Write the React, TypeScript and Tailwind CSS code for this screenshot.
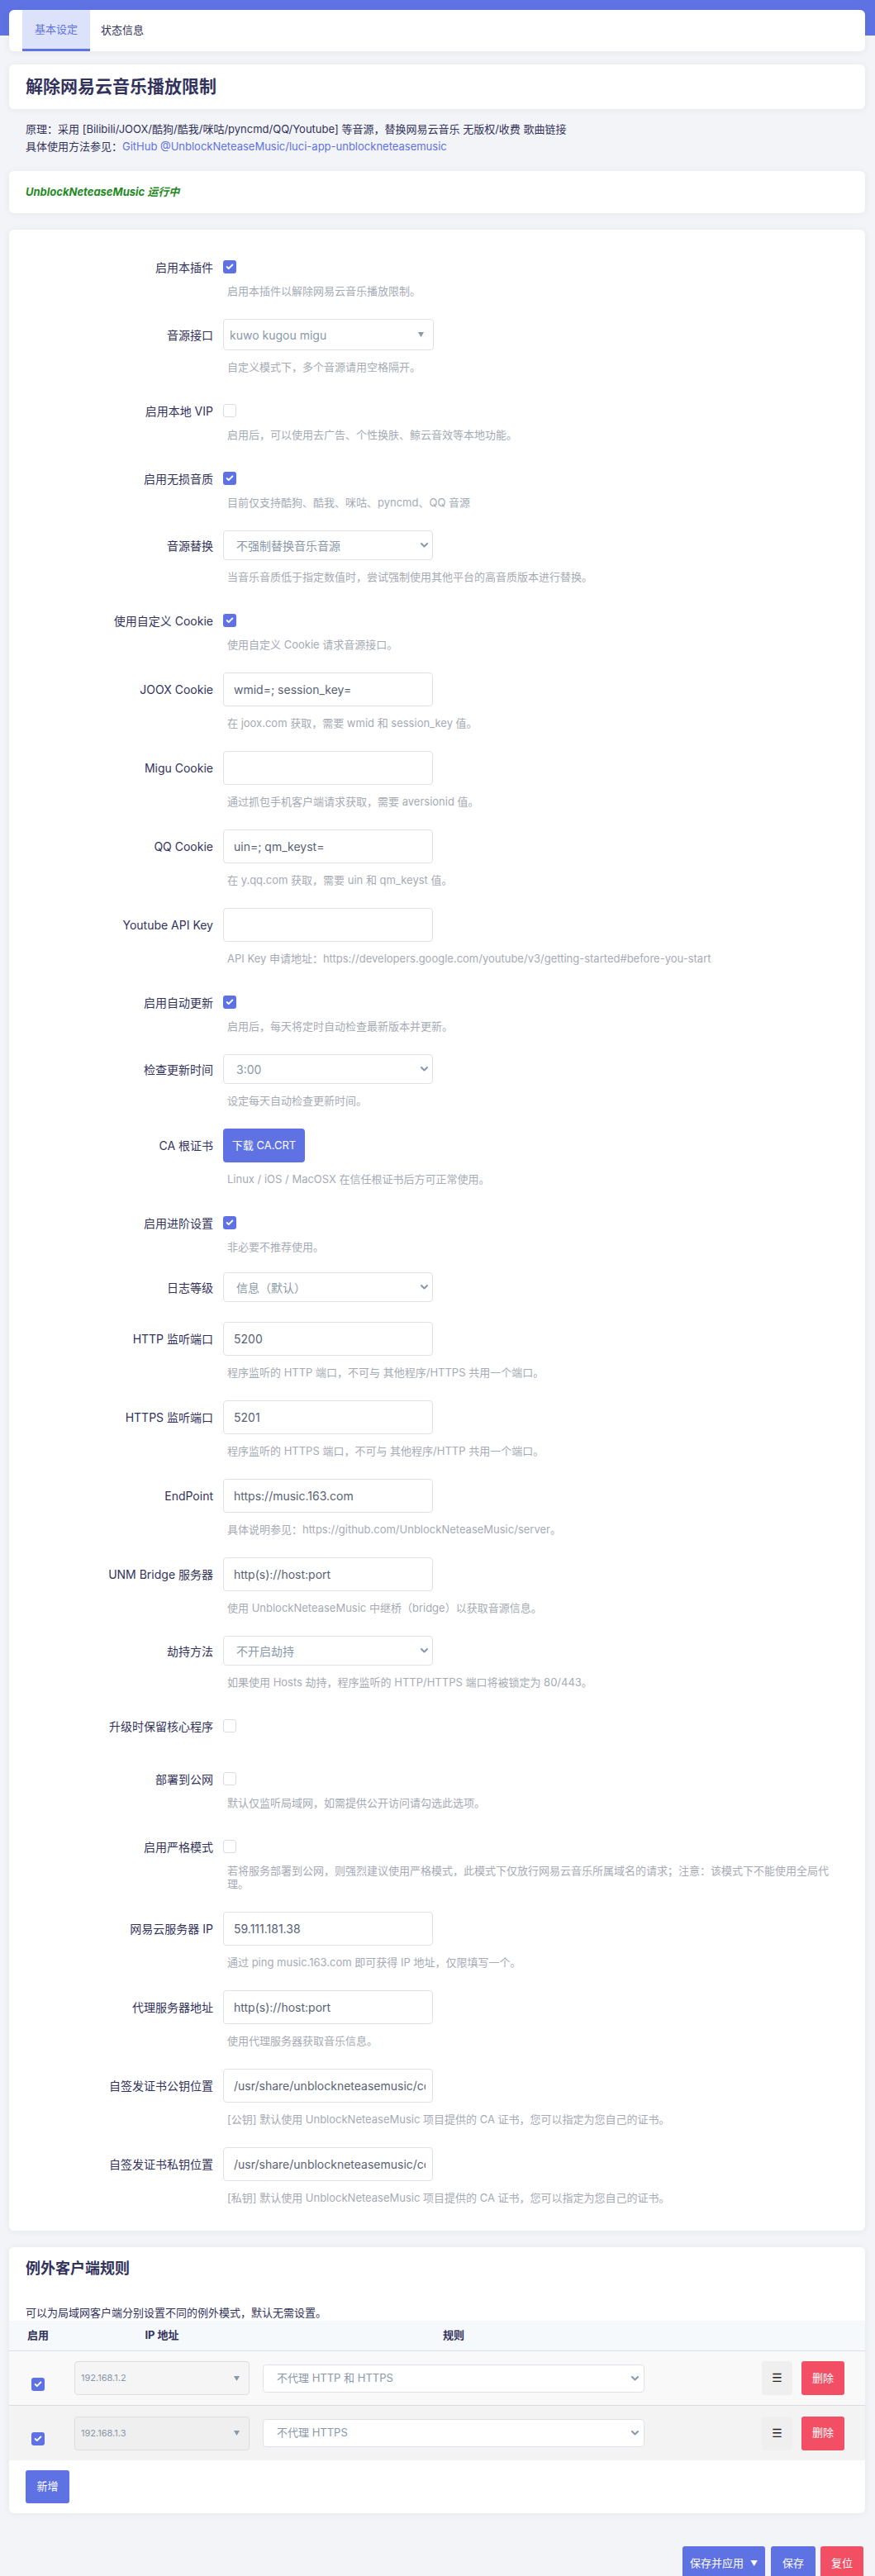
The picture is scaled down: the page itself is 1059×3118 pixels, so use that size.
import React from 'react';
import { Check } from 'lucide-react';

type Kind = 'check' | 'dropdown' | 'select' | 'input' | 'button';

interface Field {
  label: string;
  kind: Kind;
  value?: string;
  checked?: boolean;
  desc?: string;
  extra?: string;
}

const fields: Field[] = [
  { label: '启用本插件', kind: 'check', checked: true, desc: '启用本插件以解除网易云音乐播放限制。' },
  { label: '音源接口', kind: 'dropdown', value: 'kuwo kugou migu', desc: '自定义模式下，多个音源请用空格隔开。' },
  { label: '启用本地 VIP', kind: 'check', checked: false, desc: '启用后，可以使用去广告、个性换肤、鲸云音效等本地功能。' },
  { label: '启用无损音质', kind: 'check', checked: true, desc: '目前仅支持酷狗、酷我、咪咕、pyncmd、QQ 音源' },
  { label: '音源替换', kind: 'select', value: '不强制替换音乐音源', desc: '当音乐音质低于指定数值时，尝试强制使用其他平台的高音质版本进行替换。' },
  { label: '使用自定义 Cookie', kind: 'check', checked: true, desc: '使用自定义 Cookie 请求音源接口。' },
  { label: 'JOOX Cookie', kind: 'input', value: 'wmid=; session_key=', desc: '在 joox.com 获取，需要 wmid 和 session_key 值。' },
  { label: 'Migu Cookie', kind: 'input', value: '', desc: '通过抓包手机客户端请求获取，需要 aversionid 值。' },
  { label: 'QQ Cookie', kind: 'input', value: 'uin=; qm_keyst=', desc: '在 y.qq.com 获取，需要 uin 和 qm_keyst 值。' },
  { label: 'Youtube API Key', kind: 'input', value: '', desc: 'API Key 申请地址：https://developers.google.com/youtube/v3/getting-started#before-you-start' },
  { label: '启用自动更新', kind: 'check', checked: true, desc: '启用后，每天将定时自动检查最新版本并更新。' },
  { label: '检查更新时间', kind: 'select', value: '3:00', desc: '设定每天自动检查更新时间。' },
  { label: 'CA 根证书', kind: 'button', value: '下载 CA.CRT', desc: 'Linux / iOS / MacOSX 在信任根证书后方可正常使用。' },
  { label: '启用进阶设置', kind: 'check', checked: true, desc: '非必要不推荐使用。' },
  { label: '日志等级', kind: 'select', value: '信息（默认）', extra: '-mt-[3px] -mb-[2px]' },
  { label: 'HTTP 监听端口', kind: 'input', value: '5200', desc: '程序监听的 HTTP 端口，不可与 其他程序/HTTPS 共用一个端口。' },
  { label: 'HTTPS 监听端口', kind: 'input', value: '5201', desc: '程序监听的 HTTPS 端口，不可与 其他程序/HTTP 共用一个端口。' },
  { label: 'EndPoint', kind: 'input', value: 'https://music.163.com', desc: '具体说明参见：https://github.com/UnblockNeteaseMusic/server。' },
  { label: 'UNM Bridge 服务器', kind: 'input', value: 'http(s)://host:port', desc: '使用 UnblockNeteaseMusic 中继桥（bridge）以获取音源信息。' },
  { label: '劫持方法', kind: 'select', value: '不开启劫持', desc: '如果使用 Hosts 劫持，程序监听的 HTTP/HTTPS 端口将被锁定为 80/443。' },
  { label: '升级时保留核心程序', kind: 'check', checked: false },
  { label: '部署到公网', kind: 'check', checked: false, desc: '默认仅监听局域网，如需提供公开访问请勾选此选项。' },
  { label: '启用严格模式', kind: 'check', checked: false, desc: '若将服务部署到公网，则强烈建议使用严格模式，此模式下仅放行网易云音乐所属域名的请求；注意：该模式下不能使用全局代理。' },
  { label: '网易云服务器 IP', kind: 'input', value: '59.111.181.38', desc: '通过 ping music.163.com 即可获得 IP 地址，仅限填写一个。' },
  { label: '代理服务器地址', kind: 'input', value: 'http(s)://host:port', desc: '使用代理服务器获取音乐信息。' },
  { label: '自签发证书公钥位置', kind: 'input', value: '/usr/share/unblockneteasemusic/core/server.crt', desc: '[公钥] 默认使用 UnblockNeteaseMusic 项目提供的 CA 证书，您可以指定为您自己的证书。' },
  { label: '自签发证书私钥位置', kind: 'input', value: '/usr/share/unblockneteasemusic/core/server.key', desc: '[私钥] 默认使用 UnblockNeteaseMusic 项目提供的 CA 证书，您可以指定为您自己的证书。' },
];

const labelHeight: Record<Kind, string> = {
  check: 'h-[38px]',
  dropdown: 'h-[38px]',
  select: 'h-[36px]',
  input: 'h-[41px]',
  button: 'h-[41px]',
};

const Checkbox: React.FC<{ checked?: boolean }> = ({ checked }) =>
  checked ? (
    <div className="w-4 h-4 rounded-[3px] bg-[#5e72e4] flex items-center justify-center">
      <Check size={10} strokeWidth={4.5} color="#ffffff" />
    </div>
  ) : (
    <div className="w-4 h-4 rounded-[3px] border border-[#d9dce3] bg-white" />
  );

const Chevron: React.FC = () => (
  <svg width="9" height="6" viewBox="0 0 9 6" className="shrink-0">
    <polyline points="1,1 4.5,4.5 8,1" fill="none" stroke="#8898aa" strokeWidth="2" strokeLinecap="round" strokeLinejoin="round" />
  </svg>
);

const Caret: React.FC = () => (
  <svg width="7" height="6" viewBox="0 0 7 6" className="shrink-0">
    <polygon points="0,0 7,0 3.5,6" fill="#8898aa" />
  </svg>
);

const Control: React.FC<{ field: Field }> = ({ field }) => {
  switch (field.kind) {
    case 'check':
      return (
        <div className="h-[28px] pt-[11px]">
          <Checkbox checked={field.checked} />
        </div>
      );
    case 'dropdown':
      return (
        <div className="w-[255px] h-[38px] border border-[#dee1e7] rounded-[4px] bg-white flex items-center justify-between pl-[7px] pr-[11px]">
          <span className="text-[14px] text-[#8898aa]">{field.value}</span>
          <Caret />
        </div>
      );
    case 'select':
      return (
        <div className="w-[254px] h-[36px] border border-[#dee1e7] rounded-[4px] bg-white flex items-center justify-between pl-[15px] pr-[5px]">
          <span className="text-[14px] text-[#8898aa]">{field.value}</span>
          <Chevron />
        </div>
      );
    case 'input':
      return (
        <input
          defaultValue={field.value}
          className="w-[254px] h-[41px] border border-[#dee1e7] rounded-[4px] bg-white pl-[12px] pr-[8px] text-[14px] text-[#596275] outline-none"
        />
      );
    case 'button':
      return (
        <button className="w-[99px] h-[41px] rounded-[4px] bg-[#5e72e4] text-white text-[13px] flex items-center justify-center">
          {field.value}
        </button>
      );
  }
};

const FieldRow: React.FC<{ field: Field }> = ({ field }) => (
  <div className={`flex ${field.extra ?? ''}`}>
    <div
      className={`w-[247px] shrink-0 flex items-center justify-end text-[14px] text-[#32325d] whitespace-nowrap ${labelHeight[field.kind]}`}
    >
      {field.label}
    </div>
    <div className="ml-[12px] flex flex-col">
      <Control field={field} />
      {field.desc && (
        <p className="mt-[12px] pl-[5px] max-w-[740px] text-[13px] leading-[16px] text-[#a6aab5]">{field.desc}</p>
      )}
    </div>
  </div>
);

const rules = [
  { ip: '192.168.1.2', rule: '不代理 HTTP 和 HTTPS', bg: 'bg-[#f9f9f9] border-b border-[#dcdde2]' },
  { ip: '192.168.1.3', rule: '不代理 HTTPS', bg: 'bg-[#f3f3f3]' },
];

const card = 'bg-white rounded-[6px] shadow-[0_1px_8px_rgba(50,50,93,0.07)]';

const App: React.FC = () => {
  return (
    <div className="min-h-[3118px] bg-[#f3f4f7] font-['Inter','Noto_Sans_CJK_SC',sans-serif] text-[#32325d]">
      {/* Header band */}
      <div className="h-[43px] bg-[#5e72e4]" />

      <div className="-mt-[31px] pl-[11px] pr-[12px] pb-[9px]">
        {/* Tabs */}
        <div className={`${card} h-[50px] flex pl-[16px]`}>
          <div className="h-full px-[15px] bg-[#dde2fb] border-b-[3px] border-[#5e72e4] flex items-center text-[13px] text-[#5e72e4]">
            基本设定
          </div>
          <div className="h-full px-[13px] flex items-center text-[13px] text-[#32325d]">状态信息</div>
        </div>

        {/* Title */}
        <div className={`${card} mt-[16px] h-[54px] flex items-center px-[20px]`}>
          <h2 className="text-[21px] font-bold text-[#32325d]">解除网易云音乐播放限制</h2>
        </div>

        <div className="pt-[14px] px-[20px] text-[13px] leading-[21px] text-[#32325d]">
          <p>原理：采用 [Bilibili/JOOX/酷狗/酷我/咪咕/pyncmd/QQ/Youtube] 等音源，替换网易云音乐 无版权/收费 歌曲链接</p>
          <p>
            具体使用方法参见：<span className="text-[#5e72e4]">GitHub @UnblockNeteaseMusic/luci-app-unblockneteasemusic</span>
          </p>
        </div>

        {/* Status */}
        <div className={`${card} mt-[19px] h-[51px] flex items-center px-[20px]`}>
          <span className="text-[13px] italic font-bold text-[#1f8a24]">UnblockNeteaseMusic 运行中</span>
        </div>

        {/* Main settings */}
        <div className={`${card} mt-[20px] pt-[26px] pb-[32px] flex flex-col gap-[26px]`}>
          {fields.map((f) => (
            <FieldRow key={f.label} field={f} />
          ))}
        </div>

        {/* Exception clients */}
        <div className={`${card} mt-[20px] pt-[13px] pb-[12px]`}>
          <h3 className="px-[20px] text-[18px] leading-[26px] font-bold text-[#32325d]">例外客户端规则</h3>
          <p className="mt-[30px] px-[20px] text-[13px] leading-[20px] text-[#32325d]">
            可以为局域网客户端分别设置不同的例外模式，默认无需设置。
          </p>

          <div className="h-[37px] bg-[#f6f9fc] border-b border-[#dedfe6] flex items-center pl-[27px] text-[13px] font-bold text-[#32325d]">
            <div className="w-4 flex justify-center whitespace-nowrap">启用</div>
            <div className="ml-[36px] w-[212px] flex justify-center">IP 地址</div>
            <div className="ml-[16px] w-[462px] flex justify-center">规则</div>
          </div>

          {rules.map((r) => (
            <div key={r.ip} className={`h-[66px] flex items-center pl-[27px] pr-[25px] ${r.bg}`}>
              <div className="mt-[14px]">
                <Checkbox checked />
              </div>
              <div className="ml-[36px] w-[212px] h-[41px] border border-[#dcdde3] rounded-[4px] bg-black/[0.015] flex items-center justify-between pl-[7px] pr-[11px]">
                <span className="text-[11px] text-[#8898aa]">{r.ip}</span>
                <Caret />
              </div>
              <div className="ml-[16px] w-[462px] h-[34px] border border-[#dee1e7] rounded-[4px] bg-white flex items-center justify-between pl-[16px] pr-[6px]">
                <span className="text-[13px] text-[#8898aa]">{r.rule}</span>
                <Chevron />
              </div>
              <div className="flex-1" />
              <div className="w-[37px] h-[41px] rounded-[3px] bg-[#efefef] flex items-center justify-center text-[14px] text-[#222222] font-['DejaVu_Sans',sans-serif]">
                ☰
              </div>
              <button className="ml-[11px] w-[52px] h-[41px] rounded-[3px] bg-[#f34f64] text-white text-[13px]">删除</button>
            </div>
          ))}

          <div className="mt-[12px] px-[20px]">
            <button className="w-[53px] h-[40px] rounded-[3px] bg-[#5e72e4] text-white text-[13px]">新增</button>
          </div>
        </div>

        {/* Footer actions */}
        <div className="mt-[40px] flex justify-end gap-[6px] pr-[2px]">
          <button className="w-[100px] h-[41px] rounded-[3px] bg-[#5e72e4] text-white text-[13px] flex items-center justify-center gap-[8px]">
            保存并应用
            <span className="text-[9px]">▼</span>
          </button>
          <button className="ml-[1px] w-[54px] h-[41px] rounded-[3px] bg-[#5e72e4] text-white text-[13px]">保存</button>
          <button className="w-[52px] h-[41px] rounded-[3px] bg-[#f34f64] text-white text-[13px]">复位</button>
        </div>
      </div>
    </div>
  );
};

export default App;
